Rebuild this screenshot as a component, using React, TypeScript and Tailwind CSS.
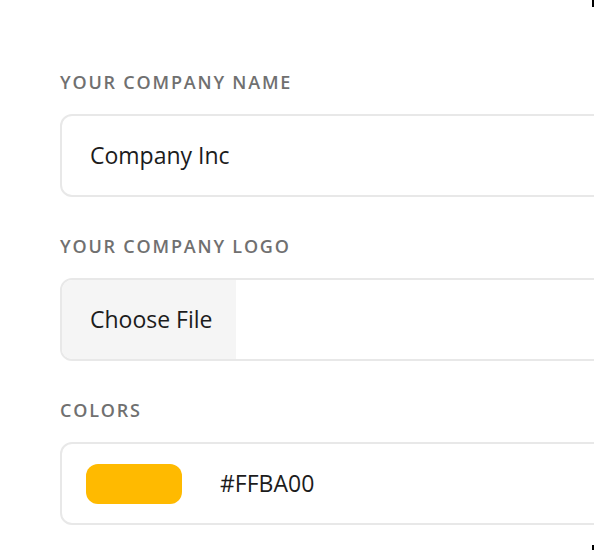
export default function App() {
  return (
    <div className="relative w-[594px] h-[550px] overflow-hidden bg-white" style={{ fontFamily: '"Open Sans", "Noto Sans", sans-serif' }}>
      {/* stray marks at the right edge */}
      <div className="absolute right-0 top-0 w-[2px] h-[7px] bg-black" />
      <div className="absolute right-0 bottom-0 w-[2px] h-[5px] bg-black" />

      <div className="pl-[60px] pt-[70px] flex flex-col">
        {/* Company name */}
        <label className="h-6 leading-6 text-[18px] font-semibold tracking-[0.1em] text-[#707070] uppercase">Your Company Name</label>
        <div className="mt-5 w-[600px] h-[83px] rounded-xl border-2 border-[#e8e8e8] flex items-center pl-[28px]">
          <span className="text-[23px] text-[#1c1c1c]">Company Inc</span>
        </div>

        {/* Company logo */}
        <label className="mt-[37px] h-6 leading-6 text-[18px] font-semibold tracking-[0.1em] text-[#707070] uppercase">Your Company Logo</label>
        <div className="mt-5 w-[600px] h-[83px] rounded-xl border-2 border-[#e8e8e8] flex overflow-hidden">
          <div className="w-[174px] h-full bg-[#f5f5f5] flex items-center pl-[28px]">
            <span className="text-[23px] text-[#1c1c1c]">Choose File</span>
          </div>
        </div>

        {/* Colors */}
        <label className="mt-[37px] h-6 leading-6 text-[18px] font-semibold tracking-[0.1em] text-[#707070] uppercase">Colors</label>
        <div className="mt-5 w-[600px] h-[83px] rounded-xl border-2 border-[#e8e8e8] flex items-center pl-[24px]">
          <div className="w-[96px] h-[40px] rounded-xl bg-[#FFBA00]" />
          <span className="ml-[38px] text-[23px] text-[#1c1c1c]">#FFBA00</span>
        </div>
      </div>
    </div>
  );
}
